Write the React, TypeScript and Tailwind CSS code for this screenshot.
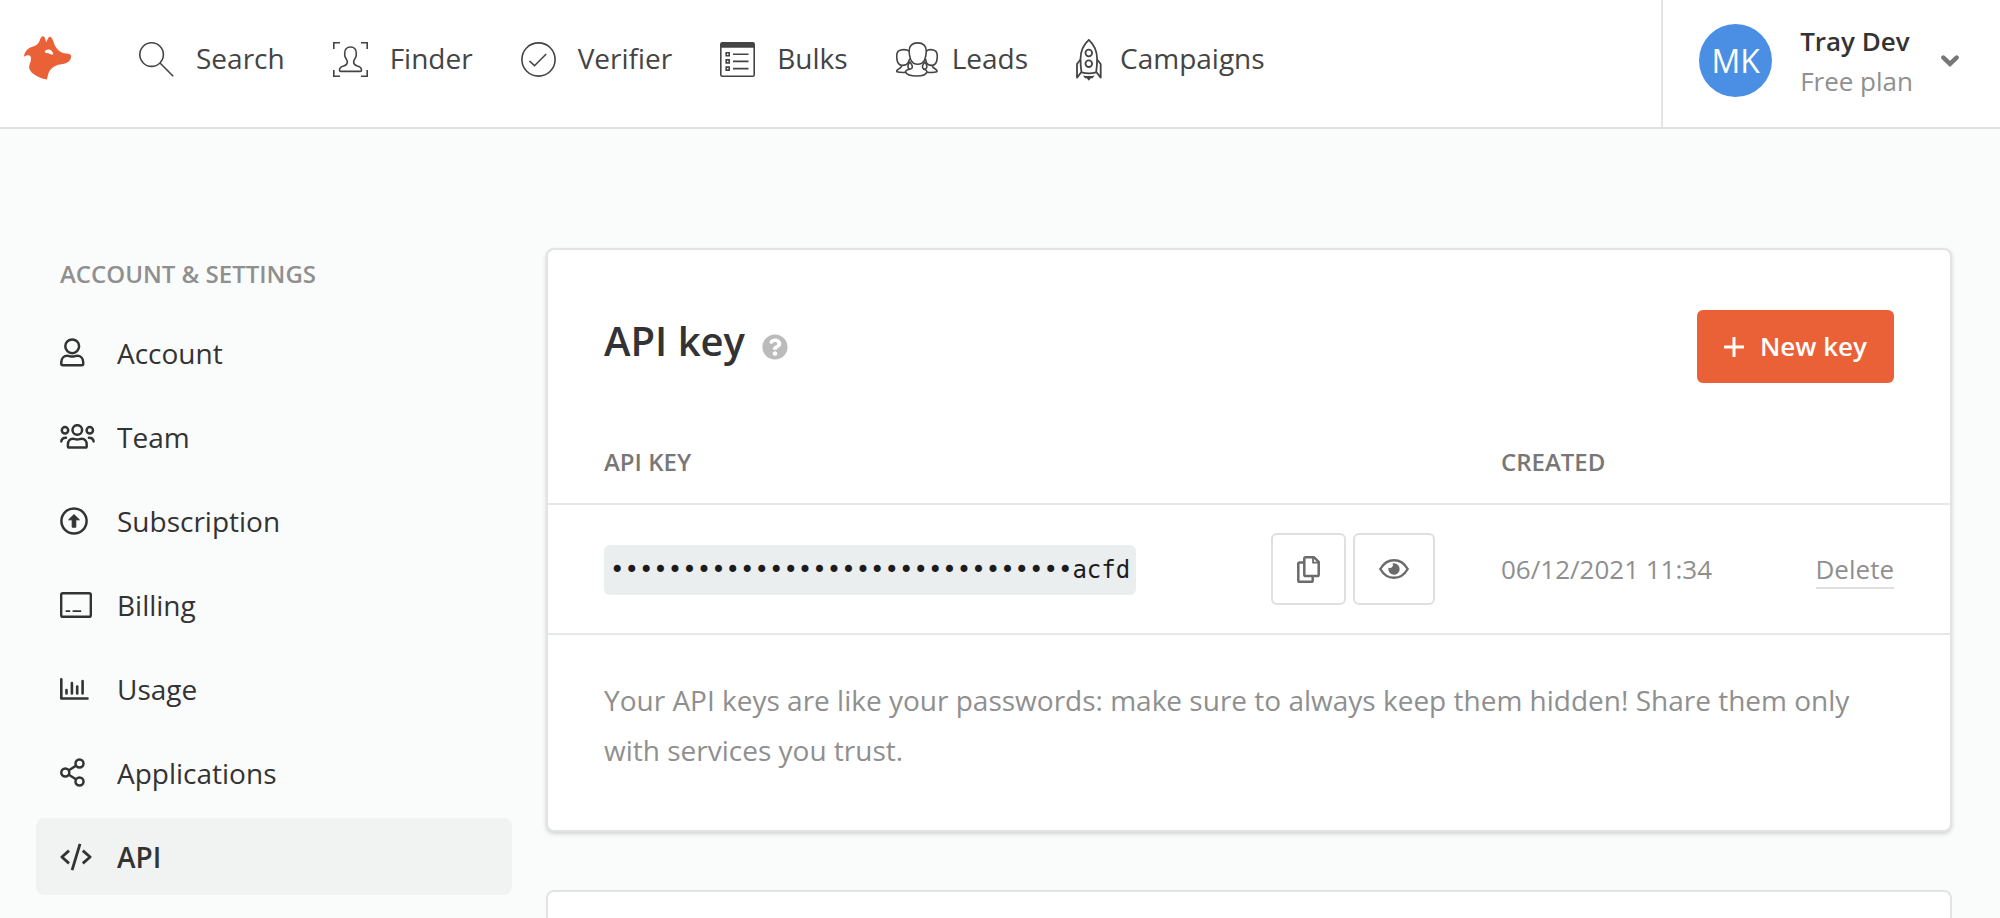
import type { ReactNode } from 'react';
import { FaQuestionCircle } from 'react-icons/fa';

interface LinkItem {
    label: string;
    icon: ReactNode;
    active?: boolean;
}

const navItems: LinkItem[] = [
    {
        label: 'Search',
        icon: (
            <svg className="mr-[22px]" width="35" height="35" viewBox="0 0 35 35" fill="none" stroke="currentColor" strokeWidth="1.6">
                <circle cx="12.6" cy="12.6" r="11.8" />
                <path d="M21 21 34.2 34.2" />
            </svg>
        ),
    },
    {
        label: 'Finder',
        icon: (
            <svg className="mr-[22px]" width="35" height="35" viewBox="0 0 35 35" fill="none" stroke="currentColor" strokeWidth="1.6">
                <path d="M.8 7V.8H7M28 .8h6.2V7M34.2 28v6.2H28M7 34.2H.8V28" />
                <path d="M17.5 5c3.8 0 6 2.6 5.8 6.2-.1 1.4.1 2.2-.3 3.3-.5 1.6-2 3.3-2.3 5-.3 2.600 1.200 3.800 3.700 4.600 2.800.8 4.200 1.900 4.100 4.100 0 .8-.4 1.200-1.200 1.200H7.700c-.8 0-1.200-.4-1.200-1.200-.1-2.200 1.300-3.300 4.100-4.100 2.500-.8 4-2 3.700-4.600-.3-1.700-1.800-3.400-2.300-5-.4-1.100-.2-1.900-.3-3.300C11.500 7.600 13.700 5 17.500 5z" />
            </svg>
        ),
    },
    {
        label: 'Verifier',
        icon: (
            <svg className="mr-[22px]" width="35" height="35" viewBox="0 0 35 35" fill="none" stroke="currentColor" strokeWidth="1.6">
                <circle cx="17.5" cy="17.5" r="16.6" />
                <path d="M8.5 19l5 4.7L25.200 12" />
            </svg>
        ),
    },
    {
        label: 'Bulks',
        icon: (
            <svg className="mr-[22px]" width="35" height="35" viewBox="0 0 35 35" fill="none" stroke="currentColor" strokeWidth="1.6">
                <rect x=".8" y=".8" width="33.4" height="33.4" rx="1.5" />
                <path d="M1 1h33v4.800H1z" fill="currentColor" stroke="none" />
                <path d="M6.200 10.700h3v3h-3zM6.200 17.900h3v3h-3zM6.200 25.100h3v3h-3z" />
                <path d="M13 12.200h15.500M13 19.400h15.500M13 26.600h15.500" />
            </svg>
        ),
    },
    {
        label: 'Leads',
        icon: (
            <svg className="mr-[14px]" width="42" height="35" viewBox="0 0 42 35" fill="none" stroke="currentColor" strokeWidth="1.6" strokeLinejoin="round">
                <path d="M21.700.9c5.600 0 8.800 3 8.600 8.300-.3 5.600-1.700 10.300-4.500 12-2.400 1.200-5.800 1.200-8.200 0-2.800-1.700-4.200-6.400-4.500-12C12.900 3.900 16.100.9 21.700.9z" />
                <path d="M13 9.200C11 7.300 5.500 7 2.300 9.200.2 11.200.6 15.500 1.200 18.500c.6 2.900 2 4.500 4.600 4.800 2.600.2 5.200-.3 6.400-2.600l1.600-4" />
                <path d="M30.300 9.200c2-1.900 6.400-2.200 9.400 0 2.100 2 1.700 6.300 1.100 9.300-.6 2.900-2 4.500-4.600 4.800-2.600.2-4.600-.3-5.600-2.600l-1.200-4" />
                <path d="M14.200 27c-2.700.6-4.800 1.600-4.600 3 1 2.800 6.200 4 11.300 4 5 0 9.200-1.200 10-4 .2-1.400-1.400-2.400-3.800-3" />
                <path d="M14.200 27c2 0 2.400-1.600 1.900-3.400-.4-1.300-1.300-2.300-2.100-3.600-1 1.200-1.800 2.400-2 3.800-.3 1.800.4 3.200 2.200 3.200zM28.600 27c-2 0-2.400-1.600-1.900-3.400.4-1.300 1.300-2.300 2.100-3.600 1 1.200 1.800 2.400 2 3.800.3 1.800-.4 3.200-2.200 3.200z" />
                <path d="M5.800 23.300c.2 2-2.200 3-4.100 4.300-.9.700-1.200 1.700-.7 2.200 2 .8 5.200.7 8.900.6M36.200 23.300c-.2 2 2 3 3.900 4.300.9.700 1.200 1.700.7 2.200-2 .8-5.600.7-9.600.6" />
            </svg>
        ),
    },
    {
        label: 'Campaigns',
        icon: (
            <svg className="mr-[18px]" width="26" height="42" viewBox="0 0 26 42" fill="none" stroke="currentColor" strokeWidth="1.8" strokeLinejoin="round">
                <path d="M12.800.9c5.200 4.700 8.300 12 8.300 19.200 0 5-.4 9.700-1 13.300-4.600 1.200-10 1.200-14.600 0-.6-3.600-1-8.300-1-13.300C4.500 12.800 7.600 5.600 12.800.9z" />
                <circle cx="12.800" cy="14" r="3.300" />
                <circle cx="12.800" cy="24.700" r="3.300" />
                <path d="M4.500 20.500 1 25v13.600l4.200-5.400M21.100 20.500l3.600 4.500v13.600l-4.200-5.400" />
                <path d="M7 36.500c3.600.8 8 .8 11.600 0l-2.200 3.100-1.400-.5-2.200 2.700-2.200-2.700-1.400.5z" fill="currentColor" stroke="none" />
            </svg>
        ),
    },
];

const settingsItems: LinkItem[] = [
    {
        label: 'Account',
        icon: (
            <svg width="25" height="29" viewBox="0 0 25 29" fill="none" stroke="currentColor" strokeWidth="2.500" strokeLinejoin="round">
                <circle cx="12.200" cy="8.300" r="6.900" />
                <path d="M1.300 25.800v-1.600c0-3.800 2.600-6.500 6-6.500 1.800 0 2.500.9 4.900.9s3.200-.9 5-.9c3.400 0 6 2.700 6 6.500v1.600c0 .9-.6 1.500-1.500 1.500H2.800c-.9 0-1.500-.6-1.500-1.500z" />
            </svg>
        ),
    },
    {
        label: 'Team',
        icon: (
            <svg width="35" height="25" viewBox="0 0 35 25" fill="none" stroke="currentColor" strokeWidth="2.500" strokeLinejoin="round" strokeLinecap="round">
                <circle cx="17.300" cy="6" r="4.800" />
                <circle cx="5" cy="6.300" r="3.200" />
                <circle cx="29.800" cy="6.300" r="3.200" />
                <path d="M7.900 22.200v-1.600c0-3.500 2-5.800 5-5.800 1.600 0 2.400.7 4.400.7s2.800-.7 4.400-.7c3 0 5 2.300 5 5.800v1.600c0 .8-.5 1.300-1.300 1.300H9.200c-.8 0-1.300-.5-1.300-1.300zM1.300 17.400c.3-2.500 1.600-3.800 4.700-3.700M33.600 17.400c-.3-2.500-1.600-3.800-4.700-3.700" />
            </svg>
        ),
    },
    {
        label: 'Subscription',
        icon: (
            <svg width="28" height="28" viewBox="0 0 28 28" fill="none" stroke="currentColor" strokeWidth="2.500">
                <circle cx="14" cy="14" r="12.600" />
                <path d="M14 7.600l5.400 5.200h-3.600v7.400h-3.600v-7.400H8.600z" fill="currentColor" strokeWidth="1" strokeLinejoin="round" />
            </svg>
        ),
    },
    {
        label: 'Billing',
        icon: (
            <svg width="32" height="26" viewBox="0 0 32 26" fill="none" stroke="currentColor" strokeWidth="2.400">
                <rect x="1.200" y="1.200" width="29.600" height="23.600" rx="1.600" />
                <path d="M5.600 19.200h4.600M12.600 19.200h8.600" strokeWidth="1.800" />
            </svg>
        ),
    },
    {
        label: 'Usage',
        icon: (
            <svg width="29" height="22" viewBox="0 0 29 22" fill="none" stroke="currentColor" strokeWidth="2.600" strokeLinecap="round" strokeLinejoin="round">
                <path d="M1.300 1.300v19.200h26.200M6.500 12v3.500M11.900 5v10.500M17.200 8.500v7M22.600 3v12.500" />
            </svg>
        ),
    },
    {
        label: 'Applications',
        icon: (
            <svg width="25" height="29" viewBox="0 0 25 29" fill="none" stroke="currentColor" strokeWidth="2.500">
                <circle cx="5.300" cy="14.500" r="4" />
                <circle cx="19.500" cy="5.500" r="4" />
                <circle cx="19.500" cy="23.500" r="4" />
                <path d="M8.900 12.200l7-4.400M8.900 16.800l7 4.400" />
            </svg>
        ),
    },
    {
        label: 'API',
        active: true,
        icon: (
            <svg width="32" height="28" viewBox="0 0 32 28" fill="none" stroke="currentColor" strokeWidth="2.800" strokeLinejoin="round">
                <path d="M9 7.600 1.900 14 9 20.400M22.800 7.600l7.300 6.400-7.300 6.400M20 .8l-7.900 26.400" />
            </svg>
        ),
    },
];

function Logo() {
    return (
        <svg width="47" height="44" viewBox="0 0 141 131" fill="#ea6138">
            <path
                fillRule="evenodd"
                d="M0 62C1 50 8 37 25 32C38 28 44 22 48 10C51 2 53 0 57 0C62 0 64 10 67 18C70 10 73 2 78 2C84 2 87 14 91 24C95 34 103 44 113 49C122 53 133 52 139 55C142 57 142 65 139 70C134 79 125 83 112 84C100 85 90 90 82 98C73 107 72 117 69 130C48 127 22 115 16 98C13 82 24 80 20 61C14 54 4 58 0 62ZM62 47C63 42 69 39 75 40C82 41 86 47 88 54C82 56 76 55 72 50C69 52 64 51 62 47Z"
            />
        </svg>
    );
}

function CopyIcon() {
    return (
        <svg width="23" height="27" viewBox="0 0 23 27" fill="none" stroke="currentColor" strokeWidth="2.500" strokeLinejoin="round">
            <path d="M8.600 1.300h8.500l4.600 4.600v12.800c0 .8-.5 1.300-1.300 1.300H8.600c-.8 0-1.300-.5-1.300-1.300V2.600c0-.8.5-1.300 1.300-1.300z" />
            <path d="M16 1.200v5.500h5.800" strokeWidth="1.800" />
            <path d="M7 6.400H2.600c-.8 0-1.300.5-1.300 1.300v16.700c0 .8.5 1.300 1.300 1.300h11.800c.8 0 1.300-.5 1.300-1.300V20.300" />
        </svg>
    );
}

function EyeIcon() {
    return (
        <svg width="30" height="20" viewBox="0 0 30 20" fill="none" stroke="currentColor" strokeWidth="2.400">
            <path d="M1.300 10C4.400 4.600 9.300 1.200 15 1.200S25.600 4.600 28.700 10C25.600 15.400 20.700 18.800 15 18.800S4.400 15.400 1.300 10z" />
            <path d="M15 4.300a5.700 5.700 0 1 1-5.500 4.200 2.900 2.900 0 0 0 4-4z" fill="currentColor" stroke="none" />
        </svg>
    );
}

function Header() {
    return (
        <header className="flex h-[129px] shrink-0 items-stretch justify-between border-b-2 border-[#dee1e0] bg-white">
            <div className="flex items-center pb-2 pl-6">
                <a href="#home" aria-label="Home" className="mr-[68px] pb-1">
                    <Logo />
                </a>
                <nav className="flex items-center gap-12 text-[28px] leading-10 text-[#444]">
                    {navItems.map((item) => (
                        <a key={item.label} href={`#${item.label.toLowerCase()}`} className="flex items-center">
                            {item.icon}
                            <span className="pb-1">{item.label}</span>
                        </a>
                    ))}
                </nav>
            </div>
            <button type="button" className="flex items-center border-l-2 border-[#e6e6e6] pr-[41px] pb-1.5 pl-9 text-left text-[26px] leading-10">
                <span className="mr-7 flex size-[73px] items-center justify-center rounded-full bg-[#4a8fe3] text-[32px] text-white">MK</span>
                <span className="mr-7 flex flex-col">
                    <span className="font-semibold text-[#333]">Tray Dev</span>
                    <span className="text-[#8f8f8f]">Free plan</span>
                </span>
                <svg width="18" height="12" viewBox="0 0 18 12" fill="none" stroke="#777" strokeWidth="4.500" strokeLinecap="round">
                    <path d="M2.400 2.600 9 8.800l6.600-6.200" />
                </svg>
            </button>
        </header>
    );
}

function Sidebar() {
    return (
        <aside className="w-[476px] shrink-0 pt-2">
            <h2 className="mb-[22px] px-6 text-2xl leading-9 font-semibold text-[#8f8f8f]">ACCOUNT &amp; SETTINGS</h2>
            <ul className="flex flex-col gap-[7px] text-[28px] leading-10 text-[#333]">
                {settingsItems.map((item) => (
                    <li key={item.label}>
                        <a
                            href={`#${item.label.toLowerCase()}`}
                            className={`flex h-[77px] items-center gap-[21px] rounded-lg px-6 ${item.active ? 'bg-[#f1f3f2] font-semibold' : ''}`}
                        >
                            <span className="flex w-9">{item.icon}</span>
                            {item.label}
                        </a>
                    </li>
                ))}
            </ul>
        </aside>
    );
}

function ApiKeyCard() {
    return (
        <section className="rounded-lg border-2 border-[#e2e4e3] bg-white shadow-[0_2px_4px_rgba(0,0,0,0.16)]">
            <div className="flex items-center px-14 pt-[60px]">
                <h1 className="pb-3 text-[40px] leading-[48px] font-semibold text-[#333]">API key</h1>
                <button type="button" aria-label="Help" className="ml-[17px] text-[26px] text-[#bbb]">
                    <FaQuestionCircle />
                </button>
                <button type="button" className="ml-auto flex h-[73px] items-center gap-4 rounded-md bg-[#ea6138] px-[27px] text-[26px] font-semibold text-white">
                    <svg width="20" height="20" viewBox="0 0 20 20" stroke="currentColor" strokeWidth="3">
                        <path d="M10 0v20M0 10h20" />
                    </svg>
                    New key
                </button>
            </div>
            <table className="w-full text-left text-[26px] text-[#8f8f8f]">
                <thead>
                    <tr className="border-b-2 border-[#e6e7e7] text-2xl leading-9 text-[#777]">
                        <th colSpan={2} className="pt-[61px] pb-[23px] pl-14 font-semibold">API KEY</th>
                        <th className="w-[340px] pt-[61px] pb-[23px] pl-[66px] font-semibold">CREATED</th>
                        <th className="w-[175px]" />
                    </tr>
                </thead>
                <tbody>
                    <tr className="border-b-2 border-[#e6e7e7]">
                        <td className="h-[130px] pl-14">
                            <code className="mt-0.5 flex h-[50px] w-fit items-center rounded-md bg-[#ebeeef] px-1.5 font-['DejaVu_Sans_Mono',monospace] text-2xl text-[#1c1c1c]">
                                {'•'.repeat(32)}acfd
                            </code>
                        </td>
                        <td>
                            <div className="flex justify-end gap-[7px] text-[#6b6b6b]">
                                <button type="button" aria-label="Copy key" className="flex h-[72px] w-[75px] items-center justify-center rounded-md border-2 border-[#dfdfdf]">
                                    <CopyIcon />
                                </button>
                                <button type="button" aria-label="Show key" className="flex h-[72px] w-[82px] items-center justify-center rounded-md border-2 border-[#dfdfdf]">
                                    <EyeIcon />
                                </button>
                            </div>
                        </td>
                        <td className="pl-[66px]">06/12/2021 11:34</td>
                        <td className="pr-14 text-right">
                            <a href="#delete" className="inline-block border-b-2 border-[#dfdfdf] leading-9">Delete</a>
                        </td>
                    </tr>
                </tbody>
            </table>
            <p className="px-14 pt-10 pb-[55px] text-[28px] leading-[50px] text-[#8f8f8f]">
                Your API keys are like your passwords: make sure to always keep them hidden! Share them only with services you trust.
            </p>
        </section>
    );
}

export default function App() {
    return (
        <div className="flex min-h-screen flex-col bg-[#fafcfb] font-['Open_Sans',sans-serif]">
            <Header />
            <div className="flex grow gap-[34px] pt-[119px] pr-12 pl-9">
                <Sidebar />
                <main className="flex min-w-0 grow flex-col gap-[58px]">
                    <ApiKeyCard />
                    {/* Next card continues below the fold */}
                    <section className="grow rounded-t-lg border-2 border-b-0 border-[#e2e4e3] bg-white" />
                </main>
            </div>
        </div>
    );
}
